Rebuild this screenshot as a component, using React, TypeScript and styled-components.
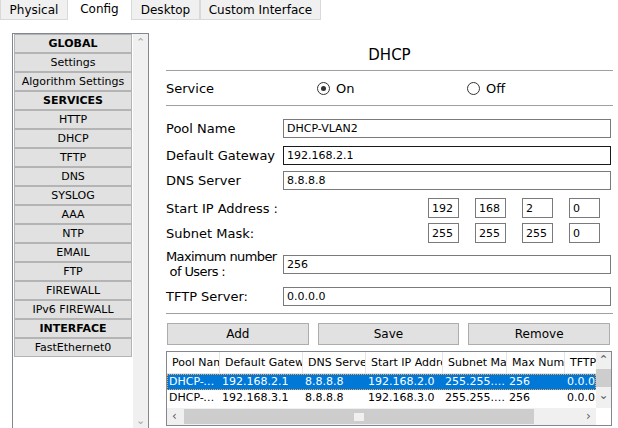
import React from 'react'
import styled, { createGlobalStyle } from 'styled-components'

const GlobalStyle = createGlobalStyle`
  body {
    margin: 0;
    background: #ffffff;
    font-family: "DejaVu Sans", Tahoma, Verdana, sans-serif;
    color: #000;
  }
`

const tabs = [
  { name: 'Physical', w: 68 },
  { name: 'Config', w: 63 },
  { name: 'Desktop', w: 69 },
  { name: 'Custom Interface', w: 121 },
]

const menu: { label: string; head?: boolean }[] = [
  { label: 'GLOBAL', head: true },
  { label: 'Settings' },
  { label: 'Algorithm Settings' },
  { label: 'SERVICES', head: true },
  { label: 'HTTP' },
  { label: 'DHCP' },
  { label: 'TFTP' },
  { label: 'DNS' },
  { label: 'SYSLOG' },
  { label: 'AAA' },
  { label: 'NTP' },
  { label: 'EMAIL' },
  { label: 'FTP' },
  { label: 'FIREWALL' },
  { label: 'IPv6 FIREWALL' },
  { label: 'INTERFACE', head: true },
  { label: 'FastEthernet0' },
]

const columns = [
  { title: 'Pool Name', w: 53 },
  { title: 'Default Gateway', w: 83 },
  { title: 'DNS Server', w: 63 },
  { title: 'Start IP Address', w: 77 },
  { title: 'Subnet Mask', w: 64 },
  { title: 'Max Number', w: 58 },
  { title: 'TFTP Server', w: 40 },
]

const pools = [
  ['DHCP-VLAN2', '192.168.2.1', '8.8.8.8', '192.168.2.0', '255.255.255.0', '256', '0.0.0.0'],
  ['DHCP-VLAN3', '192.168.3.1', '8.8.8.8', '192.168.3.0', '255.255.255.0', '256', '0.0.0.0'],
]

const App: React.FC = () => {
  return (
    <Page>
      <GlobalStyle />
      <TabBar>
        {tabs.map((t) => (
          <Tab key={t.name} w={t.w} active={t.name === 'Config'}>
            {t.name}
          </Tab>
        ))}
      </TabBar>
      <Body>
        <SidePanel>
          <MenuList>
            {menu.map((m) => (
              <MenuButton key={m.label} head={m.head}>
                {m.label}
              </MenuButton>
            ))}
          </MenuList>
          <SideScroll>
            <Arrow>&#8963;</Arrow>
            <Arrow>&#8964;</Arrow>
          </SideScroll>
        </SidePanel>

        <Content>
          <Title>DHCP</Title>
          <Rule />
          <ServiceRow>
            <Label>Service</Label>
            <RadioOption>
              <Radio checked />
              On
            </RadioOption>
            <RadioOption>
              <Radio />
              Off
            </RadioOption>
          </ServiceRow>
          <Rule />

          <FormRow mt={13}>
            <Label>Pool Name</Label>
            <TextBox>DHCP-VLAN2</TextBox>
          </FormRow>
          <FormRow mt={8}>
            <Label>Default Gateway</Label>
            <TextBox focused>192.168.2.1</TextBox>
          </FormRow>
          <FormRow mt={6}>
            <Label>DNS Server</Label>
            <TextBox>8.8.8.8</TextBox>
          </FormRow>
          <FormRow mt={8}>
            <Label>Start IP Address :</Label>
            <IpGroup>
              {['192', '168', '2', '0'].map((o, i) => (
                <Octet key={i}>{o}</Octet>
              ))}
            </IpGroup>
          </FormRow>
          <FormRow mt={5}>
            <Label>Subnet Mask:</Label>
            <IpGroup>
              {['255', '255', '255', '0'].map((o, i) => (
                <Octet key={i}>{o}</Octet>
              ))}
            </IpGroup>
          </FormRow>
          <FormRow mt={6}>
            <Label tight>
              Maximum number
              <br />
              &nbsp;of Users :
            </Label>
            <TextBox>256</TextBox>
          </FormRow>
          <FormRow mt={8}>
            <Label>TFTP Server:</Label>
            <TextBox>0.0.0.0</TextBox>
          </FormRow>
          <Rule mt={7} />

          <ButtonRow>
            <ActionButton>Add</ActionButton>
            <ActionButton>Save</ActionButton>
            <ActionButton>Remove</ActionButton>
          </ButtonRow>

          <Table>
            <TableMain>
              <HeaderRow>
                {columns.map((c) => (
                  <HeaderCell key={c.title} w={c.w}>
                    {c.title}
                  </HeaderCell>
                ))}
              </HeaderRow>
              {pools.map((p, r) => (
                <DataRow key={r} selected={r === 0}>
                  {p.map((v, i) => (
                    <DataCell key={i} w={columns[i].w} clip={i === 6}>
                      {v}
                    </DataCell>
                  ))}
                </DataRow>
              ))}
            </TableMain>
            <VScroll>
              <ScrollArrow>&#8963;</ScrollArrow>
              <VThumb />
              <ScrollArrow>&#8964;</ScrollArrow>
            </VScroll>
            <HScroll>
              <ScrollArrow>&lsaquo;</ScrollArrow>
              <HTrack>
                <HThumb>
                  <Grip />
                </HThumb>
              </HTrack>
              <ScrollArrow>&rsaquo;</ScrollArrow>
            </HScroll>
            <Corner />
          </Table>
        </Content>
      </Body>
    </Page>
  )
}

export default App

const Page = styled.div`
  width: 618px;
  height: 428px;
  overflow: hidden;
`

const TabBar = styled.div`
  display: flex;
  height: 20px;
`

const Tab = styled.div<{ w: number; active?: boolean }>`
  width: ${({ w }) => w}px;
  box-sizing: border-box;
  height: 20px;
  display: flex;
  align-items: center;
  justify-content: center;
  font-size: 12px;
  white-space: nowrap;
  background: ${({ active }) => (active ? '#ffffff' : '#f0f0f0')};
  border: 1px solid ${({ active }) => (active ? '#ffffff' : '#d9d9d9')};
  border-top: none;
  padding-bottom: ${({ active }) => (active ? '1px' : '0')};
`

const Body = styled.div`
  display: flex;
  padding-top: 13px;
`

const SidePanel = styled.div`
  margin-left: 12px;
  width: 137px;
  height: 420px;
  box-sizing: border-box;
  border: 1px solid #828790;
  display: flex;
`

const MenuList = styled.div`
  width: 118px;
  padding: 0 0 0 1px;
  display: flex;
  flex-direction: column;
`

const MenuButton = styled.div<{ head?: boolean }>`
  height: 19px;
  box-sizing: border-box;
  border: 1px solid #b4b4b4;
  background: #e1e1e1;
  font-size: 11px;
  font-weight: ${({ head }) => (head ? 700 : 400)};
  display: flex;
  align-items: center;
  justify-content: center;
  white-space: nowrap;
  overflow: hidden;
`

const SideScroll = styled.div`
  margin-left: auto;
  width: 15px;
  background: #f0f0f0;
  display: flex;
  flex-direction: column;
  justify-content: space-between;
  align-items: center;
  height: 394px;
`

const Arrow = styled.div`
  color: #a6a6a6;
  font-size: 11px;
  line-height: 14px;
  margin-top: 2px;
`

const Content = styled.div`
  margin-left: 17px;
  width: 447px;
  display: flex;
  flex-direction: column;
`

const Title = styled.div`
  text-align: center;
  font-size: 15px;
  line-height: 20px;
  margin-top: 12px;
  margin-bottom: 5px;
`

const Rule = styled.div<{ mt?: number }>`
  height: 1px;
  background: #a0a0a0;
  margin-top: ${({ mt }) => mt ?? 0}px;
`

const ServiceRow = styled.div`
  display: grid;
  grid-template-columns: 151px 150px 1fr;
  align-items: center;
  height: 34px;
`

const Label = styled.div<{ tight?: boolean }>`
  font-size: 13px;
  line-height: 15px;
  white-space: nowrap;
  letter-spacing: ${({ tight }) => (tight ? '-0.6px' : 'normal')};
`

const RadioOption = styled.div`
  display: flex;
  align-items: center;
  gap: 6px;
  font-size: 13px;
`

const Radio = styled.span<{ checked?: boolean }>`
  width: 11px;
  height: 11px;
  border: 1px solid #333;
  border-radius: 50%;
  display: inline-flex;
  align-items: center;
  justify-content: center;
  &::after {
    content: '';
    width: 5px;
    height: 5px;
    border-radius: 50%;
    background: ${({ checked }) => (checked ? '#333' : 'transparent')};
  }
`

const FormRow = styled.div<{ mt: number }>`
  display: grid;
  grid-template-columns: 117px 1fr;
  align-items: center;
  margin-top: ${({ mt }) => mt}px;
`

const TextBox = styled.div<{ focused?: boolean }>`
  height: 19px;
  box-sizing: border-box;
  border: 1px solid ${({ focused }) => (focused ? '#1a1a1a' : '#7a7a7a')};
  font-size: 11px;
  padding-left: 3px;
  display: flex;
  align-items: center;
  margin-right: 2px;
`

const IpGroup = styled.div`
  display: flex;
  justify-content: flex-end;
  gap: 16px;
  margin-right: 13px;
`

const Octet = styled.div`
  width: 31px;
  height: 20px;
  box-sizing: border-box;
  border: 1px solid #7a7a7a;
  font-size: 11px;
  padding-left: 3px;
  display: flex;
  align-items: center;
`

const ButtonRow = styled.div`
  display: grid;
  grid-template-columns: repeat(3, 1fr);
  gap: 9px;
  margin: 9px 3px 0 1px;
`

const ActionButton = styled.div`
  height: 22px;
  box-sizing: border-box;
  border: 1px solid #adadad;
  background: #e1e1e1;
  font-size: 12px;
  display: flex;
  align-items: center;
  justify-content: center;
`

const Table = styled.div`
  margin-top: 6px;
  width: 446px;
  height: 75px;
  box-sizing: border-box;
  border: 1px solid #828790;
  display: grid;
  grid-template-columns: 1fr 15px;
  grid-template-rows: 1fr 17px;
  font-size: 11px;
`

const TableMain = styled.div`
  overflow: hidden;
  display: flex;
  flex-direction: column;
`

const HeaderRow = styled.div`
  display: flex;
  height: 21px;
  border-bottom: 1px solid #e5e5e5;
`

const HeaderCell = styled.div<{ w: number }>`
  flex: 0 0 ${({ w }) => w}px;
  box-sizing: border-box;
  padding-left: 5px;
  border-right: 1px solid #e5e5e5;
  overflow: hidden;
  white-space: nowrap;
  display: flex;
  align-items: center;
`

const DataRow = styled.div<{ selected?: boolean }>`
  display: flex;
  height: 16px;
  box-sizing: border-box;
  background: ${({ selected }) => (selected ? '#0078d7' : 'transparent')};
  color: ${({ selected }) => (selected ? '#ffffff' : '#000')};
  outline: ${({ selected }) => (selected ? '1px dotted #ff9f3f' : 'none')};
  outline-offset: -1px;
`

const DataCell = styled.div<{ w: number; clip?: boolean }>`
  flex: 0 0 ${({ w }) => w}px;
  box-sizing: border-box;
  padding-left: 2px;
  overflow: hidden;
  white-space: nowrap;
  text-overflow: ${({ clip }) => (clip ? 'clip' : 'ellipsis')};
  line-height: 16px;
`

const VScroll = styled.div`
  background: #f0f0f0;
  display: flex;
  flex-direction: column;
  align-items: center;
`

const ScrollArrow = styled.div`
  color: #606060;
  font-size: 12px;
  line-height: 17px;
  width: 15px;
  text-align: center;
`

const VThumb = styled.div`
  width: 15px;
  height: 18px;
  background: #cdcdcd;
`

const HScroll = styled.div`
  background: #f0f0f0;
  display: flex;
  align-items: center;
`

const HTrack = styled.div`
  flex: 1;
  height: 17px;
  display: flex;
  align-items: center;
`

const HThumb = styled.div`
  width: 350px;
  height: 15px;
  margin-left: 2px;
  background: #cdcdcd;
  display: flex;
  align-items: center;
  justify-content: center;
`

const Grip = styled.div`
  width: 10px;
  height: 8px;
  background: #f0f0f0;
`

const Corner = styled.div`
  background: #ffffff;
`
